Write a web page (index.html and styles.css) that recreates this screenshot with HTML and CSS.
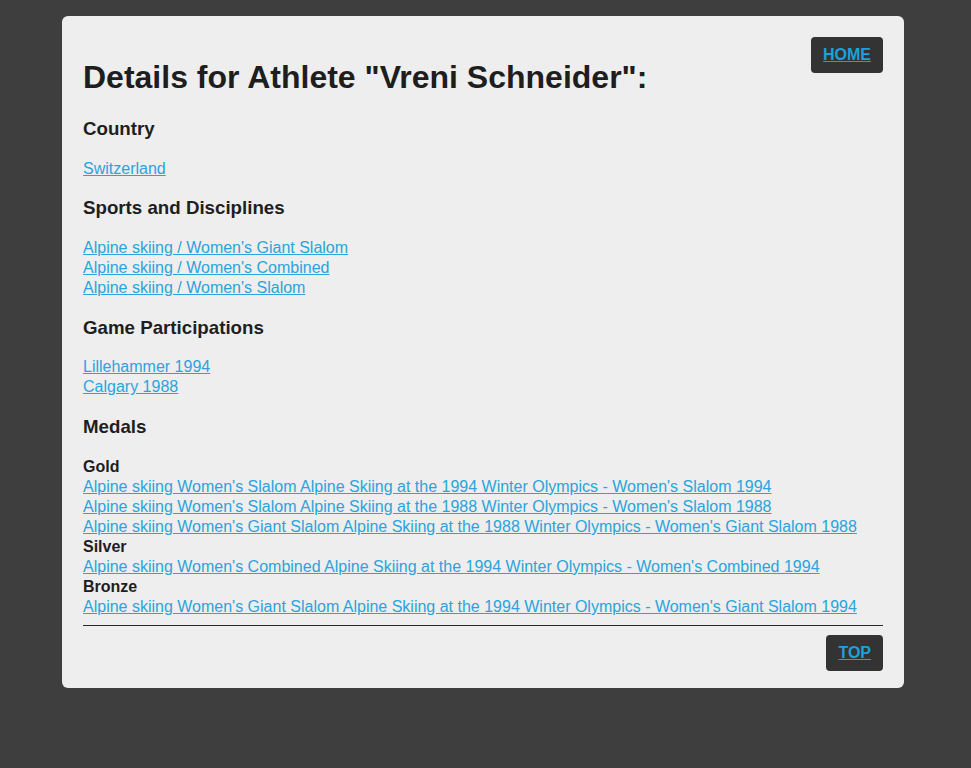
FILE: index.html
```html
<!DOCTYPE html>
<html>
<head>
<meta charset="utf-8">
<link rel="stylesheet" href="styles.css">
</head>
<body>
<div class="card">
  <a class="btn btn-home" href="#">HOME</a>
  <h1>Details for Athlete "Vreni Schneider":</h1>
  <h3>Country</h3>
  <div class="list"><a href="#">Switzerland</a></div>
  <h3>Sports and Disciplines</h3>
  <div class="list">
    <a href="#">Alpine skiing / Women's Giant Slalom</a>
    <a href="#">Alpine skiing / Women's Combined</a>
    <a href="#">Alpine skiing / Women's Slalom</a>
  </div>
  <h3>Game Participations</h3>
  <div class="list">
    <a href="#">Lillehammer 1994</a>
    <a href="#">Calgary 1988</a>
  </div>
  <h3>Medals</h3>
  <div class="list">
    <b>Gold</b>
    <a href="#">Alpine skiing Women's Slalom Alpine Skiing at the 1994 Winter Olympics - Women's Slalom 1994</a>
    <a href="#">Alpine skiing Women's Slalom Alpine Skiing at the 1988 Winter Olympics - Women's Slalom 1988</a>
    <a href="#">Alpine skiing Women's Giant Slalom Alpine Skiing at the 1988 Winter Olympics - Women's Giant Slalom 1988</a>
    <b>Silver</b>
    <a href="#">Alpine skiing Women's Combined Alpine Skiing at the 1994 Winter Olympics - Women's Combined 1994</a>
    <b>Bronze</b>
    <a href="#">Alpine skiing Women's Giant Slalom Alpine Skiing at the 1994 Winter Olympics - Women's Giant Slalom 1994</a>
  </div>
  <hr class="rule">
  <div class="footer"><a class="btn" href="#">TOP</a></div>
</div>
</body>
</html>
```
FILE: styles.css
```css
html, body {
  margin: 0;
  padding: 0;
}
body {
  background: #3e3e3e;
  font-family: "Liberation Sans", Arial, sans-serif;
  font-size: 16px;
  color: #1e1e1e;
  min-height: 768px;
}
.card {
  background: #eeeeee;
  width: 800px;
  margin: 16px 0 0 62px;
  padding: 21px 21px 17px 21px;
  border-radius: 6px;
  display: flow-root;
}
h1 {
  font-size: 32px;
  margin: 22.4px 0 21.44px;
  line-height: normal;
}
h3 {
  font-size: 18.72px;
  margin: 18.72px 0;
  line-height: normal;
}
.list {
  display: flex;
  flex-direction: column;
  align-items: flex-start;
  line-height: 20px;
}
.list a {
  color: #2ba3dc;
}
.list b {
  color: #1e1e1e;
}
.btn {
  display: inline-block;
  background: #333333;
  color: #1fa0d8;
  font-weight: bold;
  padding: 8px 12px;
  border-radius: 4px;
  line-height: 20px;
}
.btn-home {
  float: right;
}
.rule {
  border: 0;
  border-top: 1px solid #2a2a2a;
  margin: 8px 0 9px;
}
.footer {
  display: flex;
  justify-content: flex-end;
}
```
